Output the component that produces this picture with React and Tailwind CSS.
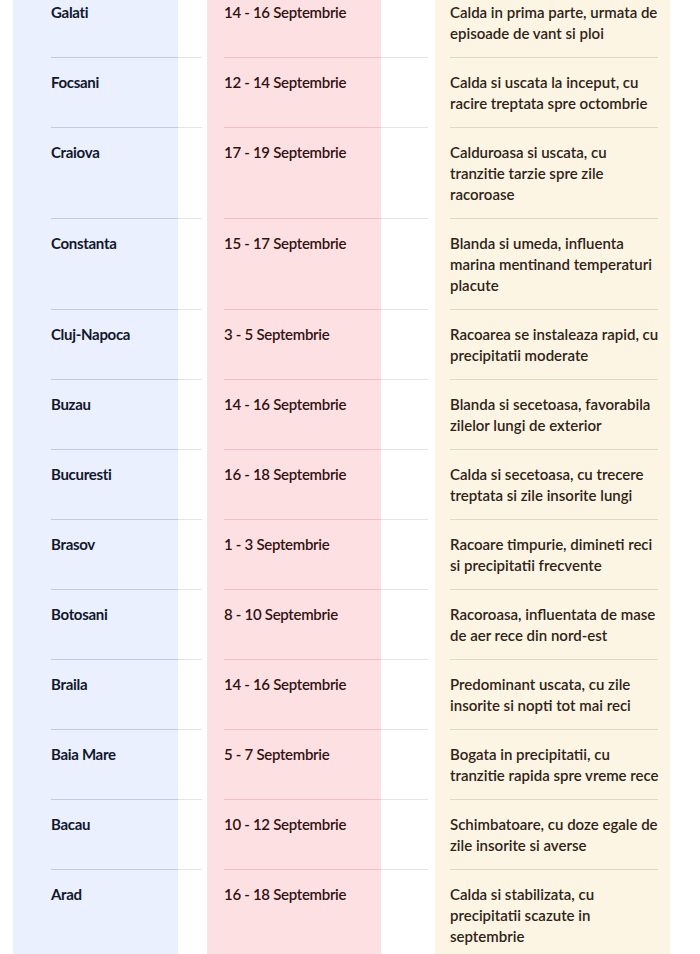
import React from 'react';

const rows = [
    { city: 'Galati', date: '14 - 16 Septembrie', desc: ['Calda in prima parte, urmata de', 'episoade de vant si ploi'] },
    { city: 'Focsani', date: '12 - 14 Septembrie', desc: ['Calda si uscata la inceput, cu', 'racire treptata spre octombrie'] },
    { city: 'Craiova', date: '17 - 19 Septembrie', desc: ['Calduroasa si uscata, cu', 'tranzitie tarzie spre zile', 'racoroase'] },
    { city: 'Constanta', date: '15 - 17 Septembrie', desc: ['Blanda si umeda, influenta', 'marina mentinand temperaturi', 'placute'] },
    { city: 'Cluj-Napoca', date: '3 - 5 Septembrie', desc: ['Racoarea se instaleaza rapid, cu', 'precipitatii moderate'] },
    { city: 'Buzau', date: '14 - 16 Septembrie', desc: ['Blanda si secetoasa, favorabila', 'zilelor lungi de exterior'] },
    { city: 'Bucuresti', date: '16 - 18 Septembrie', desc: ['Calda si secetoasa, cu trecere', 'treptata si zile insorite lungi'] },
    { city: 'Brasov', date: '1 - 3 Septembrie', desc: ['Racoare timpurie, dimineti reci', 'si precipitatii frecvente'] },
    { city: 'Botosani', date: '8 - 10 Septembrie', desc: ['Racoroasa, influentata de mase', 'de aer rece din nord-est'] },
    { city: 'Braila', date: '14 - 16 Septembrie', desc: ['Predominant uscata, cu zile', 'insorite si nopti tot mai reci'] },
    { city: 'Baia Mare', date: '5 - 7 Septembrie', desc: ['Bogata in precipitatii, cu', 'tranzitie rapida spre vreme rece'] },
    { city: 'Bacau', date: '10 - 12 Septembrie', desc: ['Schimbatoare, cu doze egale de', 'zile insorite si averse'] },
    { city: 'Arad', date: '16 - 18 Septembrie', desc: ['Calda si stabilizata, cu', 'precipitatii scazute in', 'septembrie'] },
];

const Row = ({ row, first }) => {
    const pad = first ? 'pt-[2px] pb-[13px]' : 'pt-[14px] pb-[13px]';
    return (
        <div className="flex">
            {/* city */}
            <div className="ml-[51px] w-[151px] shrink-0">
                {!first && <div className="h-px bg-[linear-gradient(to_right,#c3cae2_127px,#e2e4e9_127px)]" />}
                <div className={`${pad} text-[15px] leading-[21px] font-bold text-[#12172c] tracking-[-0.3px]`}>
                    {row.city}
                </div>
            </div>
            {/* date */}
            <div className="ml-[22px] w-[204px] shrink-0">
                {!first && <div className="h-px bg-[linear-gradient(to_right,#efbfc4_157px,#e5e5e8_157px)]" />}
                <div className={`${pad} text-[15px] leading-[21px] font-semibold text-[#331214] tracking-[-0.3px]`}>
                    {row.date}
                </div>
            </div>
            {/* description */}
            <div className="ml-[22px] w-[208px] shrink-0">
                {!first && <div className="h-px bg-[#e4d7c3]" />}
                <div className={`${pad} text-[15px] leading-[21px] font-semibold text-[#2f2317]`}>
                    {row.desc.map((line) => (
                        <div key={line} className="whitespace-nowrap">{line}</div>
                    ))}
                </div>
            </div>
        </div>
    );
};

export default function App() {
    return (
        <div
            className="w-[700px] min-h-[954px] bg-[linear-gradient(to_right,#fff_13px,#eaf0fd_13px,#eaf0fd_178px,#fff_178px,#fff_207px,#fde1e2_207px,#fde1e2_381px,#fff_381px,#fff_435px,#fdf5e4_435px,#fdf5e4_670px,#fff_670px)] font-['Lato',sans-serif]"
        >
            {rows.map((row, i) => (
                <Row key={row.city} row={row} first={i === 0} />
            ))}
        </div>
    );
}
